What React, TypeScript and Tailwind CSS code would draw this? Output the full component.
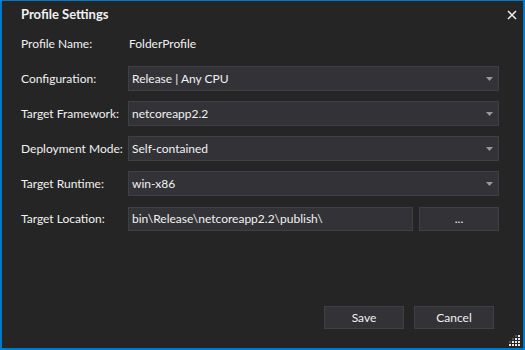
import React from "react";

const font = { fontFamily: 'Lato, "Noto Sans", sans-serif' };

function Arrow() {
  return (
    <svg width="7" height="4" viewBox="0 0 7 4" className="shrink-0">
      <path d="M0 0 H7 L3.5 4 Z" fill="#999999" />
    </svg>
  );
}

function Combo({ value }: { value: string }) {
  return (
    <div className="flex-1 h-[25px] flex items-center justify-between bg-[#333337] border border-[#3f3f46] pl-[3px] pr-[5px] text-[#f1f1f1]">
      <span>{value}</span>
      <Arrow />
    </div>
  );
}

function Row({ label, children, h = "h-[25px]" }: { label: string; children: React.ReactNode; h?: string }) {
  return (
    <div className={`flex items-center ${h}`}>
      <div className="w-[107px] shrink-0 text-[#f1f1f1] whitespace-nowrap">{label}</div>
      {children}
    </div>
  );
}

function Grip() {
  const dots: React.ReactNode[] = [];
  for (let r = 0; r < 4; r++) {
    for (let c = 0; c < 4; c++) {
      const white = r + c >= 3;
      const grey = r + c === 2;
      if (!white && !grey) continue;
      dots.push(
        <rect key={`${r}-${c}`} x={c * 3} y={r * 3} width="2" height="2" fill={white ? "#e8e8e8" : "#555555"} />
      );
    }
  }
  return (
    <svg width="12" height="12" viewBox="0 0 12 12" className="absolute right-[2px] bottom-[1px]">
      {dots}
    </svg>
  );
}

export default function App() {
  return (
    <div
      className="relative w-[525px] h-[350px] bg-[#252526] border-t border-x-2 border-b-2 border-[#007acc] flex flex-col text-[12px] leading-none"
      style={font}
    >
      <div className="h-[27px] flex items-center justify-between pl-[19px] pr-[6px]">
        <span className="font-bold text-[13px] text-[#f1f1f1]">Profile Settings</span>
        <svg width="10" height="10" viewBox="0 0 10 10">
          <path d="M1 1 L9 9 M9 1 L1 9" stroke="#f1f1f1" strokeWidth="1.5" />
        </svg>
      </div>
      <div className="flex flex-col gap-[10px] pt-[4px] pl-[19px] pr-[24px]">
        <Row label="Profile Name:" h="h-[24px]">
          <span className="pl-[1px] text-[#f1f1f1]">FolderProfile</span>
        </Row>
        <Row label="Configuration:">
          <Combo value="Release | Any CPU" />
        </Row>
        <Row label="Target Framework:">
          <Combo value="netcoreapp2.2" />
        </Row>
        <Row label="Deployment Mode:">
          <Combo value="Self-contained" />
        </Row>
        <Row label="Target Runtime:">
          <Combo value="win-x86" />
        </Row>
        <Row label="Target Location:">
          <div className="flex-1 flex gap-[6px] h-[24px]">
            <div className="flex-1 flex items-center bg-[#333337] border border-[#3f3f46] pl-[3px] text-[#f1f1f1]">
              bin\Release\netcoreapp2.2\publish\
            </div>
            <button className="w-[80px] flex items-center justify-center bg-[#333337] border border-[#3f3f46] text-[#f1f1f1]">
              ...
            </button>
          </div>
        </Row>
      </div>
      <div className="flex-1" />
      <div className="flex justify-end gap-[10px] pr-[29px] pb-[19px]">
        <button className="w-[80px] h-[23px] flex items-center justify-center bg-[#333337] border border-[#3f3f46] text-[#f1f1f1]">
          Save
        </button>
        <button className="w-[80px] h-[23px] flex items-center justify-center bg-[#333337] border border-[#3f3f46] text-[#f1f1f1]">
          Cancel
        </button>
      </div>
      <Grip />
    </div>
  );
}
